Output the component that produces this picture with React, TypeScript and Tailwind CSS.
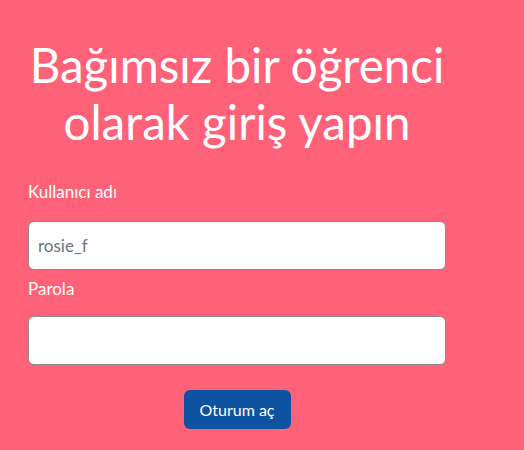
export default function App() {
  return (
    <div className="min-h-screen bg-[#ff6179] font-['Lato',sans-serif] text-white">
      <div className="w-[474px] px-[28px] pt-[36px]">
        <h1 className="-mx-[28px] whitespace-nowrap text-center text-[47.5px] leading-[57px] font-normal">
          Bağımsız bir öğrenci
          <br />
          olarak giriş yapın
        </h1>

        <form className="mt-[30px]">
          <label className="block text-[17px] leading-6">Kullanıcı adı</label>
          <input
            type="text"
            defaultValue="rosie_f"
            className="mt-[17px] block h-[49px] w-full rounded-[6px] border border-[#8a8a8a] bg-white px-[9px] text-[17px] text-[#6c757d] outline-none"
          />

          <label className="mt-[7px] block text-[17px] leading-6">Parola</label>
          <input
            type="password"
            className="mt-[15px] block h-[49px] w-full rounded-[6px] border border-[#8a8a8a] bg-white px-[9px] text-[17px] text-[#6c757d] outline-none"
          />

          <div className="mt-[25px] flex justify-center">
            <button
              type="button"
              className="h-[39px] w-[107px] rounded-[6px] bg-[#0d53a1] text-[16px] text-white"
            >
              Oturum aç
            </button>
          </div>
        </form>
      </div>
    </div>
  );
}
